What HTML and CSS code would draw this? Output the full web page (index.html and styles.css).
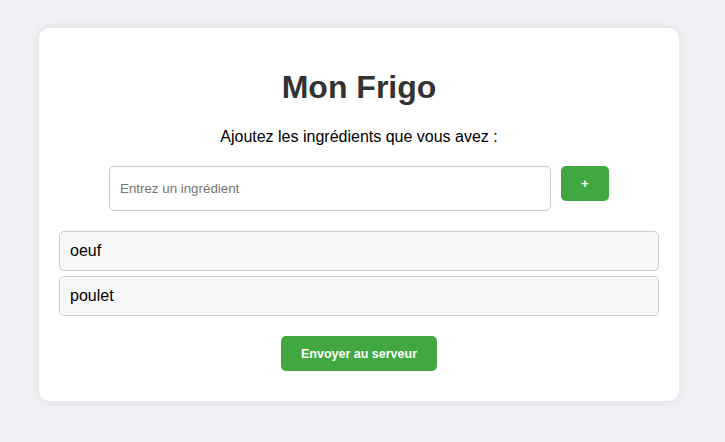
FILE: index.html
```html
<!DOCTYPE html>
<html lang="fr">
<head>
<meta charset="utf-8">
<title>Mon Frigo</title>
<link rel="stylesheet" href="styles.css">
</head>
<body>
<div class="card">
  <h1 class="title">Mon Frigo</h1>
  <p class="subtitle">Ajoutez les ingrédients que vous avez :</p>
  <div class="add-row">
    <input class="ing-input" type="text" placeholder="Entrez un ingrédient">
    <button class="btn btn-add">+</button>
  </div>
  <ul class="list">
    <li class="item">oeuf</li>
    <li class="item">poulet</li>
  </ul>
  <div class="send-row">
    <button class="btn btn-send">Envoyer au serveur</button>
  </div>
</div>
</body>
</html>
```
FILE: styles.css
```css
html, body {
  margin: 0;
  padding: 0;
}
body {
  background: #f0f0f5;
  font-family: "Liberation Sans", Arial, sans-serif;
  color: #000;
  height: 442px;
  overflow: hidden;
}
.card {
  box-sizing: border-box;
  width: 640px;
  margin: 28px 0 0 39px;
  background: #fff;
  border-radius: 10px;
  box-shadow: 0 0 10px rgba(0, 0, 0, 0.08);
  padding: 20px 20px 30px;
}
.title {
  margin: 21px 0 0;
  text-align: center;
  font-size: 32px;
  line-height: 37px;
  font-weight: bold;
  color: #333;
}
.subtitle {
  margin: 22px 0 0;
  text-align: center;
  font-size: 16px;
  line-height: 18px;
}
.add-row {
  display: flex;
  justify-content: center;
  align-items: flex-start;
  gap: 10px;
  margin-top: 20px;
}
.ing-input {
  box-sizing: border-box;
  width: 442px;
  height: 45px;
  padding: 0 10px;
  border: 1px solid #ccc;
  border-radius: 5px;
  font-family: "Liberation Sans", Arial, sans-serif;
  font-size: 13.33px;
  outline: none;
}
.ing-input::placeholder {
  color: #757575;
}
.btn {
  box-sizing: border-box;
  height: 35px;
  padding: 0 20px;
  border: none;
  border-radius: 5px;
  background: #41a741;
  color: #fff;
  font-family: "Liberation Sans", Arial, sans-serif;
  font-size: 13.33px;
  font-weight: bold;
  white-space: nowrap;
}
.btn-add {
  width: 48px;
  padding: 0;
}
.list {
  list-style: none;
  margin: 20px 0 0;
  padding: 0;
  display: flex;
  flex-direction: column;
  gap: 5px;
}
.item {
  box-sizing: border-box;
  height: 40px;
  padding: 0 10px;
  display: flex;
  align-items: center;
  background: #f7f8fa;
  border: 1px solid #ccc;
  border-radius: 5px;
  font-size: 16px;
}
.send-row {
  display: flex;
  justify-content: center;
  margin-top: 20px;
}
.btn-send {
  width: 156px;
  padding: 0;
  font-size: 12.5px;
}
```
